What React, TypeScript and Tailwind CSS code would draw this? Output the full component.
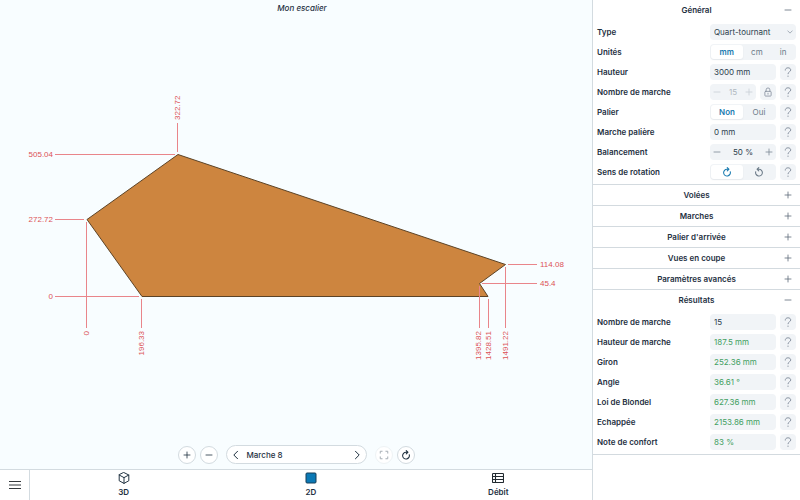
import { useState, type ReactNode } from "react";

const iconProps = {
  viewBox: "0 0 16 16",
  fill: "none",
  stroke: "currentColor",
  strokeLinecap: "round" as const,
  strokeLinejoin: "round" as const,
};

function Plus({ className }: { className: string }) {
  return (
    <svg {...iconProps} strokeWidth={1.6} className={className} aria-hidden="true">
      <path d="M8 2v12M2 8h12" />
    </svg>
  );
}

function Minus({ className }: { className: string }) {
  return (
    <svg {...iconProps} strokeWidth={1.6} className={className} aria-hidden="true">
      <path d="M2 8h12" />
    </svg>
  );
}

function Rotate({ className }: { className: string }) {
  return (
    <svg {...iconProps} strokeWidth={1.7} className={className} aria-hidden="true">
      <path d="M13.200 7.500A5.400 5.400 0 1 1 8 3.600h2.800M8.400 1l2.600 2.600-2.600 2.600" />
    </svg>
  );
}

function Help({ label }: { label: string }) {
  return (
    <button
      type="button"
      aria-label={`Aide : ${label}`}
      className="flex size-4 shrink-0 items-center justify-center rounded bg-[#f1f4f7] text-[#8b95a3]"
    >
      <svg {...iconProps} strokeWidth={1.6} className="size-2.5" aria-hidden="true">
        <path d="M3.600 5C3.600 2.700 5.400 1.300 8 1.300s4.400 1.300 4.400 3.500c0 2.800-4.400 2.800-4.400 6" />
        <path d="M8 14.400v.2" strokeWidth={2} />
      </svg>
    </button>
  );
}

function Row({ label, id, help = true, children }: { label: string; id?: string; help?: boolean; children: ReactNode }) {
  return (
    <div className="flex h-4 items-center gap-1">
      {id ? (
        <label htmlFor={id} className="flex-1 font-semibold">{label}</label>
      ) : (
        <span className="flex-1 font-semibold">{label}</span>
      )}
      <div className={help ? "flex w-[66px] gap-1" : "flex w-[86px]"}>{children}</div>
      {help && <Help label={label} />}
    </div>
  );
}

function Field({ id, value, green = false }: { id: string; value: string; green?: boolean }) {
  return (
    <input
      id={id}
      defaultValue={value}
      readOnly={green}
      className={`h-4 w-full min-w-0 rounded bg-[#f1f4f7] px-1 outline-none ${green ? "text-[#43a062]" : "text-[#2c3e4d]"}`}
    />
  );
}

function Segments({ label, options }: { label: string; options: { name: string; view: ReactNode }[] }) {
  const [active, setActive] = useState(0);
  return (
    <div role="group" aria-label={label} className="flex h-4 w-full rounded bg-[#f1f4f7] p-px">
      {options.map((o, i) => (
        <button
          key={o.name}
          type="button"
          aria-label={o.name}
          aria-pressed={i === active}
          onClick={() => setActive(i)}
          className={`flex flex-auto items-center justify-center rounded-[3px] px-1 ${options.length === 2 ? "basis-0" : "basis-auto"} ${
            i === active ? "bg-white font-semibold text-[#1a7bb0] shadow-xs" : "text-[#6b7a88]"
          }`}
        >
          {o.view}
        </button>
      ))}
    </div>
  );
}

function Stepper({ id, value, disabled = false }: { id: string; value: string; disabled?: boolean }) {
  return (
    <div className={`flex h-4 min-w-0 flex-1 items-center justify-between rounded bg-[#f1f4f7] px-[3px] ${disabled ? "text-[#c9cfd5]" : "text-[#7b8894]"}`}>
      <button type="button" aria-label="Diminuer" disabled={disabled}><Minus className="size-2" /></button>
      <input
        id={id}
        defaultValue={value}
        disabled={disabled}
        className={`w-6 min-w-0 bg-transparent text-center outline-none ${disabled ? "text-[#b0b8c1]" : "text-[#2c3e4d]"}`}
      />
      <button type="button" aria-label="Augmenter" disabled={disabled}><Plus className="size-2" /></button>
    </div>
  );
}

function Section({ title, open = false, children }: { title: string; open?: boolean; children?: ReactNode }) {
  return (
    <section className="border-b border-[#d3dadf]">
      <h2>
        <button type="button" aria-expanded={open} className="flex h-5 w-full items-center pr-2 pl-4 font-semibold">
          <span className="flex-1 text-center">{title}</span>
          <span className="text-[#5d6b78]">{open ? <Minus className="size-2" /> : <Plus className="size-2" />}</span>
        </button>
      </h2>
      {children && <div className="flex flex-col gap-1 p-1">{children}</div>}
    </section>
  );
}

const results = [
  { label: "Hauteur de marche", value: "187.5 mm" },
  { label: "Giron", value: "252.36 mm" },
  { label: "Angle", value: "36.61 °" },
  { label: "Loi de Blondel", value: "627.36 mm" },
  { label: "Echappée", value: "2153.86 mm" },
  { label: "Note de confort", value: "83 %" },
];

const guides = [
  [55, 154.5, 175, 154.5], [177.5, 123, 177.5, 152], [55, 219.5, 84, 219.5],
  [86.5, 222, 86.5, 328], [55, 296.5, 139, 296.5], [141.5, 299, 141.5, 328],
  [508, 264.5, 537, 264.5], [482, 283.5, 537, 283.5], [479.5, 286, 479.5, 328],
  [488.5, 299, 488.5, 328], [505.5, 267, 505.5, 328],
];

const sideLabels = [
  { x: 53, y: 157, text: "505.04", anchor: "end" as const },
  { x: 53, y: 222, text: "272.72", anchor: "end" as const },
  { x: 53, y: 299, text: "0", anchor: "end" as const },
  { x: 540, y: 267, text: "114.08", anchor: "start" as const },
  { x: 540, y: 286, text: "45.4", anchor: "start" as const },
];

const turnedLabels = [
  { x: 180, y: 120, text: "322.72", anchor: "start" as const },
  { x: 89, y: 331, text: "0", anchor: "end" as const },
  { x: 144, y: 331, text: "196.33", anchor: "end" as const },
  { x: 481, y: 331, text: "1395.82", anchor: "end" as const },
  { x: 491, y: 331, text: "1428.51", anchor: "end" as const },
  { x: 508, y: 331, text: "1491.22", anchor: "end" as const },
];

function StepDrawing() {
  return (
    <svg viewBox="0 16 592 429" className="min-h-0 w-full flex-1" role="img" aria-label="Marche 8">
      <polygon points="87,219.5 178,154.5 505.5,264.5 479.5,283.5 488,296.5 142,296.5" fill="#cd853f" stroke="#5c4326" strokeWidth="1" />
      <g stroke="#e9858a" strokeWidth="1">
        {guides.map(([x1, y1, x2, y2]) => <line key={`${x1}-${y1}`} x1={x1} y1={y1} x2={x2} y2={y2} />)}
      </g>
      <g fill="#dc5257" className="font-['Liberation_Sans',Arial,sans-serif] text-[8px]">
        {sideLabels.map((l) => <text key={l.text} x={l.x} y={l.y} textAnchor={l.anchor}>{l.text}</text>)}
        {turnedLabels.map((l) => (
          <text key={l.text} transform={`translate(${l.x} ${l.y}) rotate(-90)`} textAnchor={l.anchor}>{l.text}</text>
        ))}
      </g>
    </svg>
  );
}

const roundButton = "flex size-[18px] items-center justify-center rounded-full border border-[#d3dbe0] bg-white";

function Toolbar() {
  return (
    <div className="flex items-center justify-center gap-2 pb-[5px]">
      <div className="flex gap-1">
        <button type="button" aria-label="Zoom avant" className={roundButton}><Plus className="size-2" /></button>
        <button type="button" aria-label="Zoom arrière" className={roundButton}><Minus className="size-2" /></button>
      </div>
      <div className="flex h-[19px] w-[141px] items-center rounded-full border border-[#d3dbe0] bg-white px-1">
        <button type="button" aria-label="Marche précédente">
          <svg {...iconProps} strokeWidth={1.6} className="size-2.5" aria-hidden="true"><path d="M10.500 2 4.500 8l6 6" /></svg>
        </button>
        <span className="flex-1 pl-1.5 font-medium">Marche 8</span>
        <button type="button" aria-label="Marche suivante">
          <svg {...iconProps} strokeWidth={1.6} className="size-2.5" aria-hidden="true"><path d="m5.500 2 6 6-6 6" /></svg>
        </button>
      </div>
      <div className="flex gap-1">
        <button type="button" aria-label="Recadrer" disabled className="flex size-[18px] items-center justify-center rounded-full border border-[#eef3f5] bg-white text-[#a5adb4]">
          <svg {...iconProps} strokeWidth={1.6} className="size-2.5" aria-hidden="true">
            <path d="M2 5V2h3M11 2h3v3M14 11v3h-3M5 14H2v-3" />
          </svg>
        </button>
        <button type="button" aria-label="Pivoter" className={roundButton}><Rotate className="size-2.5" /></button>
      </div>
    </div>
  );
}

function Tabs() {
  const tab = "flex flex-1 flex-col items-center justify-center gap-0.5 font-semibold";
  return (
    <nav className="flex h-[31px] border-t border-[#d3dbe0] bg-white">
      <button type="button" aria-label="Menu" className="flex w-[30px] items-center justify-center border-r border-[#d3dbe0]">
        <svg viewBox="0 0 12 10" className="h-2.5 w-3" stroke="#33383c" strokeWidth="1.2" aria-hidden="true"><path d="M0 1.500h12M0 5h12M0 8.500h12" /></svg>
      </button>
      <button type="button" className={tab}>
        <svg {...iconProps} strokeWidth={1.3} className="size-3" aria-hidden="true">
          <path d="m8 .8 6.400 3.200v7.700L8 15.200l-6.400-3.500V4zM1.600 4 8 7.500 14.400 4M8 7.500v7.700" />
        </svg>
        <span>3D</span>
      </button>
      <button type="button" aria-current="page" className={tab}>
        <svg viewBox="0 0 12 12" className="size-3" aria-hidden="true"><rect x="1" y="1" width="10" height="10" rx="1" fill="#0b79b5" stroke="#163f58" /></svg>
        <span>2D</span>
      </button>
      <button type="button" className={tab}>
        <svg viewBox="0 0 12 12" className="size-3" fill="none" stroke="#222a30" strokeWidth="1.1" aria-hidden="true"><rect x=".5" y="1.500" width="11" height="9" rx=".8" /><path d="M.5 4.500h11M.5 7.500h11M3.500 1.500v9" /></svg>
        <span>Débit</span>
      </button>
    </nav>
  );
}

export default function App() {
  return (
    <div className="flex h-screen min-h-[460px] bg-white font-[Inter,'Open_Sans',sans-serif] text-[8px] leading-[12px] text-[#1e303f]">
      <main className="flex min-w-0 flex-1 flex-col bg-[#f8fdff]">
        <h1 className="h-4 pt-[2px] pl-3 text-center font-medium italic">Mon escalier</h1>
        <StepDrawing />
        <Toolbar />
        <Tabs />
      </main>
      <aside className="w-[208px] shrink-0 border-l border-[#d3dbe0] bg-white">
        <Section title="Général" open>
          <Row label="Type" id="type" help={false}>
            <div className="relative w-full">
              <select id="type" className="block h-4 w-full appearance-none rounded bg-[#f1f4f7] px-1 text-[#2c3e4d] outline-none">
                <option>Quart-tournant</option>
              </select>
              <svg {...iconProps} strokeWidth={2} className="pointer-events-none absolute top-[5px] right-[3px] size-[6px] text-[#8b95a3]" aria-hidden="true"><path d="m2 5 6 6 6-6" /></svg>
            </div>
          </Row>
          <Row label="Unités" help={false}>
            <Segments label="Unités" options={[{ name: "mm", view: "mm" }, { name: "cm", view: "cm" }, { name: "in", view: "in" }]} />
          </Row>
          <Row label="Hauteur" id="height"><Field id="height" value="3000 mm" /></Row>
          <Row label="Nombre de marche" id="steps">
            <Stepper id="steps" value="15" disabled />
            <button type="button" aria-label="Verrouiller" className="flex size-4 items-center justify-center rounded bg-[#f1f4f7] text-[#8b95a3]">
              <svg {...iconProps} strokeWidth={1.4} className="size-2.5" aria-hidden="true"><rect x="3" y="7" width="10" height="7.500" rx="1" /><path d="M5 7V4.500a3 3 0 0 1 6 0V7M8 10v1.500" /></svg>
            </button>
          </Row>
          <Row label="Palier">
            <Segments label="Palier" options={[{ name: "Non", view: "Non" }, { name: "Oui", view: "Oui" }]} />
          </Row>
          <Row label="Marche palière" id="landing"><Field id="landing" value="0 mm" /></Row>
          <Row label="Balancement" id="balance"><Stepper id="balance" value="50 %" /></Row>
          <Row label="Sens de rotation">
            <Segments
              label="Sens de rotation"
              options={[
                { name: "Horaire", view: <Rotate className="size-2.5" /> },
                { name: "Antihoraire", view: <Rotate className="size-2.5 -scale-x-100" /> },
              ]}
            />
          </Row>
        </Section>
        <Section title="Volées" />
        <Section title="Marches" />
        <Section title="Palier d'arrivée" />
        <Section title="Vues en coupe" />
        <Section title="Paramètres avancés" />
        <Section title="Résultats" open>
          <Row label="Nombre de marche" id="result-steps"><Field id="result-steps" value="15" /></Row>
          {results.map((r) => (
            <Row key={r.label} label={r.label} id={r.label}><Field id={r.label} value={r.value} green /></Row>
          ))}
        </Section>
      </aside>
    </div>
  );
}
